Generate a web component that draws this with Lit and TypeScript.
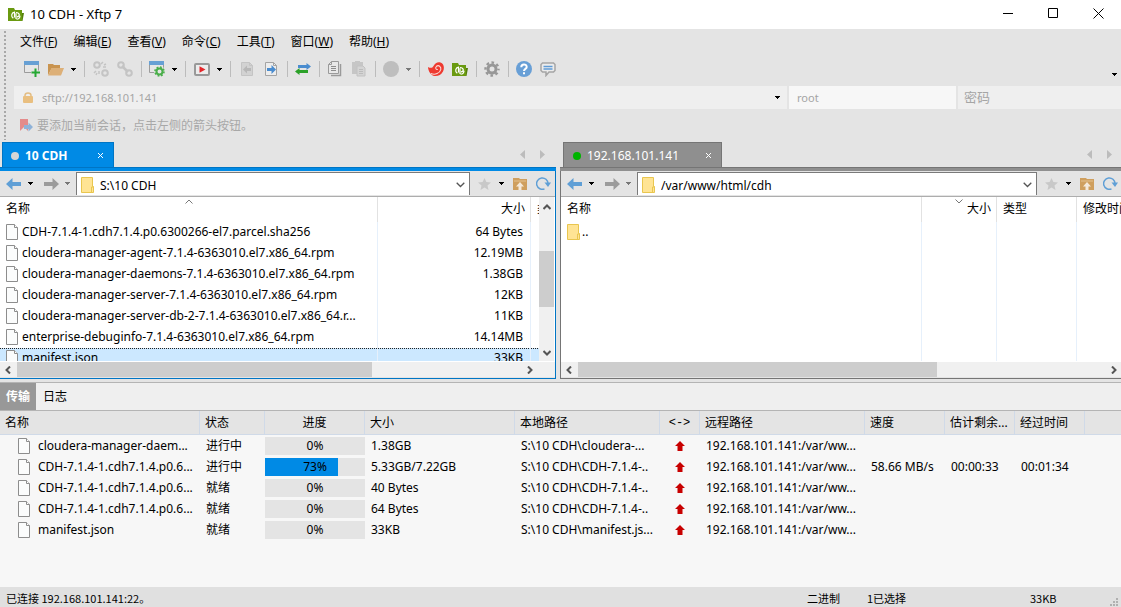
import { LitElement, html, svg, css, nothing } from "lit";
import { customElement, property } from "lit/decorators.js";
import { classMap } from "lit/directives/class-map.js";

/* ---------- glyphs ---------- */

const caret = (color = "#000") => html`<svg class="glyph" width="5" height="3" viewBox="0 0 5 3">
  <path d="M0 0h5v1H0zM1 1h3v1H1zM2 2h1v1H2z" fill=${color} shape-rendering="crispEdges" />
</svg>`;

const fileIcon = html`<svg class="glyph" width="12" height="16" viewBox="0 0 12 16">
  <path d="M.5.5h8l3 3v12H.5z" fill="#fbfcfc" stroke="#8d8d8d" />
  <path d="M8.5.5v3h3" fill="#fff" stroke="#8d8d8d" />
</svg>`;

const folderIcon = html`<svg class="glyph" width="13" height="16" viewBox="0 0 13 16">
  <path d="M.5.5h11v9h1v6H.5z" fill="#ffe494" stroke="#e9c64f" />
  <path d="M10.5 15V10h2" fill="none" stroke="#e9c64f" />
</svg>`;

const xftpLogo = html`<svg class="glyph" width="16" height="13" viewBox="0 0 16 13">
  <path d="M0 0h6l1 2h7v11H0z" fill="#6a9a10" />
  <path d="M14 5h2l-1.500 8H14z" fill="#55800a" />
  <path d="M5.300 10.300C2.800 8.500 3.200 4.900 6.500 4.200V9.500M8 11V5.200M8 4.500c4 0 4.300 4 1 4.300M8.500 11.200c2 0 3.400-1.600 3.500-3.500" fill="none" stroke="#fff" stroke-width="1.200" />
</svg>`;

const windowShape = svg`<path d="M.5.5h14v11H.5z" fill="#e6e6e6" stroke="#9b9b9b" />
  <path d="M0 0h15v4H0z" fill="#67a0d4" />`;

const icon = (w: number, h: number, body: unknown) =>
  html`<svg class="glyph" width=${w} height=${h} viewBox="0 0 ${w} ${h}">${body}</svg>`;

const pageShape = (c: string, f: string) =>
  svg`<path d="M.5.5h8l3 3v10H.5z" fill=${f} stroke=${c} /><path d="M8.500.5v3h3" fill="none" stroke=${c} />`;

const chainShape = svg`<g fill="none" stroke="#c4c4c4" stroke-width="2">
  <circle cx="4" cy="4" r="2.800" /><circle cx="12" cy="12" r="2.800" /></g>`;

const icons = {
  newSession: icon(16, 16, svg`${windowShape}<path d="M11.500 7v9M7 11.500h9" stroke="#e4e4e4" stroke-width="4" /><path d="M11.500 7.500V16M7.500 11.500H16" stroke="#25a833" stroke-width="2" />`),
  open: icon(16, 13, svg`<path d="M0 12V1h5l1 1h6v3h-8z" fill="#c99450" /><path d="M3.500 5H16l-3 7.500H0z" fill="#ddb078" />`),
  disconnect: icon(16, 16, svg`${chainShape}<path d="M8 3l2-2M10 6h3M6 10v3M3 10l-2 2M13 3l-2 1M4 12l-1 2" stroke="#c4c4c4" stroke-width="1.500" />`),
  reconnect: icon(16, 16, svg`${chainShape}<path d="M5 5l6 6" stroke="#c4c4c4" stroke-width="2.500" />`),
  properties: icon(16, 16, svg`${windowShape}<circle cx="10.500" cy="10.500" r="5.500" fill="#e4e4e4" /><circle cx="10.500" cy="10.500" r="3" fill="none" stroke="#4aae4a" stroke-width="2" /><circle cx="10.500" cy="10.500" r="4.500" fill="none" stroke="#4aae4a" stroke-width="1.600" stroke-dasharray="1.800 1.730" />`),
  run: icon(16, 13, svg`<rect x="1" y="1" width="14" height="11" rx="1" fill="#ececec" stroke="#999" stroke-width="2" /><path d="M5.500 3.200v6.600l6-3.300z" fill="#e5252a" />`),
  sendLeft: icon(12, 14, svg`${pageShape("#c4c4c4", "#d2d2d2")}<path d="M2 7.500l4-4v2.500h4v3H6v2.500z" fill="#b7b7b7" />`),
  sendRight: icon(12, 14, svg`${pageShape("#a4a4a4", "#ededed")}<path d="M11 7.500l-4.500-4.500v3H2v3h4.500v3z" fill="#4a8ccf" />`),
  transfer: icon(16, 12, svg`<path d="M16 3.500L11.500 0v2H3v3h8.500v2z" fill="#4a8ccf" /><path d="M0 8.500L4.500 5v2H13v3H4.500v2z" fill="#2ba128" />`),
  copy: icon(14, 16, svg`<path d="M3.500.5h7v12h-10v-9z" fill="#e8e8e8" stroke="#9a9a9a" /><path d="M.5 3.500h3v-3" fill="none" stroke="#9a9a9a" /><path d="M3 5.500h5M3 7.500h5M3 9.500h5" stroke="#8d8d8d" /><path d="M12.500 3v11.500H3" fill="none" stroke="#9a9a9a" stroke-width="1.500" />`),
  paste: icon(14, 16, svg`<path d="M0 1h3V0h5v1h3v12H0z" fill="#c6c6c6" /><path d="M5 5h6l2 2v8H5z" fill="#d4d4d4" stroke="#c2c2c2" /><path d="M7 8.500h4M7 10.500h4M7 12.500h4" stroke="#bcbcbc" />`),
  stop: icon(16, 16, svg`<circle cx="8" cy="8" r="8" fill="#bebebe" />`),
  xshell: icon(16, 15, svg`<path d="M0 5c2.500 1.500 4.500 1 5.500-1C7 1 9.500-.3 12.500.4c3.500 1 4.200 5.600 2.500 9-1.700 3.200-5 5-8.500 4.600C3 13.500.3 9.500 0 5z" fill="#ee3a30" /><path d="M3 11.500c4 2 9-.5 9.800-4 .6-3-2.300-4.800-4.300-3.200-1.600 1.400-.5 3.800 1.300 3.100" fill="none" stroke="#f9dcd8" stroke-width="1.100" />`),
  xftp: xftpLogo,
  options: icon(16, 16, svg`<circle cx="8" cy="8" r="4" fill="none" stroke="#979797" stroke-width="3" /><circle cx="8" cy="8" r="6.500" fill="none" stroke="#979797" stroke-width="2.400" stroke-dasharray="2.600 2.505" stroke-dashoffset="1.300" />`),
  help: icon(16, 16, svg`<circle cx="8" cy="8" r="8" fill="#689fd6" /><path d="M5.300 6.200c0-3.600 5.400-3.500 5.400-.3C10.700 8 8 7.800 8 10" fill="none" stroke="#fff" stroke-width="2" /><path d="M7 11.200h2v2H7z" fill="#fff" />`),
  feedback: icon(16, 15, svg`<path d="M2.500 1h11l1.500 1.500v6L13.500 10H9l-3 3.500V10H2.500L1 8.500v-6z" fill="#ececec" stroke="#a5a5a5" stroke-width="1.500" /><path d="M3.500 4.500h9M3.500 7h9" stroke="#5f9bd5" stroke-width="1.500" />`),
  lock: icon(10, 11, svg`<path d="M2 5V3.500C2 .3 8 .3 8 3.500V5" fill="none" stroke="#e3bd84" stroke-width="1.500" /><rect y="4" width="10" height="7" rx="1" fill="#e9bf80" />`),
  bookmark: icon(13, 13, svg`<path d="M0 0h8v12L4 8l-4 4z" fill="#e48b8b" /><path d="M13 8L8.500 3.500V6H4v4h4.500v2.500z" fill="#8fb2d8" />`),
  back: icon(15, 12, svg`<path d="M0 6l6.500-6v4H15v4H6.500v4z" fill="#5f9fd6" />`),
  forward: icon(15, 12, svg`<path d="M15 6L8.500 0v4H0v4h8.500v4z" fill="#9b9b9b" />`),
  star: icon(13, 12, svg`<path d="M6.500 0l1.900 4 4.600.4-3.500 3L10.500 12l-4-2.500-4 2.500 1-4.600L0 4.400 4.600 4z" fill="#c8c8c8" />`),
  up: icon(14, 12, svg`<path d="M0 0h6l1 1h7v11H0z" fill="#cf9f5e" /><path d="M1 3h12" stroke="#dcb67f" stroke-width="1.500" /><path d="M7 4l4 4.500H8.500V12h-3V8.500H3z" fill="#f4e9da" />`),
  refresh: icon(16, 13, svg`<path d="M8.500 11.900A5.700 5.700 0 1 1 12 6.500" fill="none" stroke="#5f9fd6" stroke-width="1.500" /><path d="M8.500 5.500H15l-3 4.500z" fill="#5f9fd6" />`),
  chevron: icon(9, 6, svg`<path d="M.7.700L4.500 4.500 8.300.7" fill="none" stroke="#555" stroke-width="1.300" />`),
  close: icon(5, 5, svg`<path d="M0 0l5 5M5 0L0 5" stroke="#fff" />`),
  prev: icon(5, 9, svg`<path d="M5 0v9L0 4.500z" fill="#bcbcbc" />`),
  next: icon(5, 9, svg`<path d="M0 0v9l5-4.500z" fill="#bcbcbc" />`),
  upload: icon(10, 10, svg`<path d="M5 0l5 5H7.500v5h-5V5H0z" fill="#c80000" />`),
};

const chev = { up: "M.5 6L4 2.500 7.500 6", down: "M.5 2L4 5.500 7.500 2", left: "M6 .5L2.500 4 6 7.500", right: "M2 .5L5.500 4 2 7.500" };
const scrollArrow = (d: keyof typeof chev) => icon(8, 8, svg`<path d=${chev[d]} fill="none" stroke="#555" stroke-width="2" />`);

/* ---------- shared styles ---------- */

const base = css`
  * { box-sizing: border-box; }
  button, input { font: inherit; color: inherit; background: none; border: 0; padding: 0; margin: 0; outline: 0; border-radius: 0; min-width: 0; }
  button { display: flex; align-items: center; justify-content: center; }
  .glyph { display: block; flex: none; }
  table { border-collapse: separate; border-spacing: 0; table-layout: fixed; width: 100%; }
  th, td { padding: 0; text-align: left; font-weight: 400; white-space: nowrap; overflow: hidden; }
`;

/* ---------- file pane ---------- */

interface FileRow { name: string; size?: string; folder?: boolean; selected?: boolean; }

@customElement("file-pane")
export class FilePane extends LitElement {
  @property({ type: Boolean, reflect: true }) active = false;
  @property({ type: Boolean }) scrollable = false;
  @property() tab = "";
  @property() path = "";
  @property() sort: "asc" | "desc" = "asc";
  @property({ attribute: false }) rows: FileRow[] = [];

  static styles = [base, css`
    :host { --accent: #8f8f8f; --edge: #757575; display: flex; flex-direction: column; min-width: 0; }
    :host([active]) { --accent: #008ae5; --edge: #0075c4; }
    .tabs { display: flex; align-items: center; height: 25px; padding: 0 7px 0 3px; }
    :host([active]) .tabs { padding: 0 9px 0 2px; }
    .tab { display: flex; align-items: center; gap: 6px; align-self: stretch; padding: 1px 10px 0 9px; width: 159px; background: var(--accent); border: 1px solid var(--edge); border-bottom: 0; color: #fff; }
    :host([active]) .tab { width: 112px; font-weight: 700; padding: 1px 10px 0 8px; }
    .dot { width: 8px; height: 8px; border-radius: 50%; background: #00b400; }
    :host([active]) .dot { background: #d6d6d6; }
    .tab button { margin-left: auto; }
    .pager { display: flex; gap: 15px; margin-left: auto; padding-right: 2px; }
    .strip { height: 4px; background: var(--accent); border-top: 1px solid var(--edge); }
    .frame { border-bottom: 1px solid var(--edge); border-left: 1px solid var(--edge); }
    :host([active]) .frame { border-left: 0; border-right: 1px solid var(--edge); }
    .nav { display: flex; align-items: center; height: 26px; padding: 0 3px 0 6px; background: #e4e4e4; border-bottom: 1px solid #adadad; }
    .go { gap: 7px; padding-right: 11px; }
    .go2 { gap: 6px; padding-right: 6px; }
    .combo { display: flex; align-items: center; flex: 1; min-width: 0; align-self: stretch; margin: 1px 8px 1px 0; background: #fff; border: 1px solid #7a7a7a; border-bottom: 0; padding: 2px 4px 0 4px; gap: 6px; }
    .combo input { flex: 1; height: 20px; }
    .tools { display: flex; align-items: center; }
    .tools button:nth-child(2) { margin: 0 9px 0 8px; }
    .tools button:nth-child(4) { margin-left: 9px; }
    :host(:not([active])) .nav { padding-right: 2px; }
    .view { display: flex; height: 165px; background: #fff; padding-bottom: 1px; }
    .clip { flex: 1; min-width: 0; overflow: hidden; }
    table { height: 100%; }
    thead th { position: relative; height: 25px; line-height: 24px; padding: 0 6px; border-right: 1px solid #e2e2e2; vertical-align: top; }
    td { border-right: 1px solid #e6f0fb; vertical-align: top; }
    .item td { height: 21px; }
    td:last-child, thead th:last-child { border-right: 0; padding-right: 0; }
    .end { text-align: right; padding-right: 7px; line-height: 19px; }
    thead .end { padding-right: 5px; line-height: 24px; }
    .entry { display: flex; align-items: center; gap: 4px; height: 19px; padding-left: 6px; }
    .entry.dir { gap: 2px; }
    .selected td { background: #cce8ff; background-image: repeating-linear-gradient(90deg, #222 0 1px, transparent 1px 2px); background-size: 100% 1px; background-repeat: no-repeat; }
    .mark { position: absolute; top: 2px; left: 50%; margin-left: -4px; }
    .c1 { width: 361px; } .c2 { width: 75px; } .c3 { width: 80px; }
    :host([active]) .c1 { width: 378px; }
    :host([active]) .c2 { width: 153px; }
    .vbar { display: flex; flex-direction: column; align-items: center; width: 15px; margin-right: 1px; padding: 6px 0 4px; background: #f0f0f0; }
    .vthumb { align-self: stretch; height: 56px; background: #cdcdcd; margin: 40px 0 auto; }
    .hbar { display: flex; align-items: center; height: 15px; margin-bottom: 1px; padding: 0 3px 0 4px; background: #f0f0f0; }
    :host([active]) .hbar { padding-right: 21px; }
    .hthumb { align-self: stretch; width: 65%; background: #cdcdcd; margin: 0 auto 0 5px; }
    :host([active]) .hthumb { width: 67%; }
    .foot { background: #fff; }
  `];

  render() {
    return html`
      <div class="tabs">
        <div class="tab"><span class="dot"></span><span>${this.tab}</span><button aria-label="关闭标签">${icons.close}</button></div>
        <div class="pager"><button aria-label="上一个标签">${icons.prev}</button><button aria-label="下一个标签">${icons.next}</button></div>
      </div>
      <div class="strip"></div>
      <div class="frame">
        <div class="nav">
          <button class="go" aria-label="后退">${icons.back}${caret()}</button>
          <button class="go2" aria-label="前进">${icons.forward}${caret("#777")}</button>
          <div class="combo">
            ${folderIcon}
            <input aria-label="路径" .value=${this.path} />
            <button aria-label="路径列表">${icons.chevron}</button>
          </div>
          <div class="tools">
            <button aria-label="书签">${icons.star}</button>
            <button aria-label="书签列表">${caret()}</button>
            <button aria-label="上级目录">${icons.up}</button>
            <button aria-label="刷新">${icons.refresh}</button>
          </div>
        </div>
        <div class="view">
          <div class="clip">
            <table>
              <colgroup><col class="c1" /><col class="c2" />${this.scrollable ? nothing : html`<col class="c3" />`}<col /></colgroup>
              <thead><tr>
                <th>名称${this.sort === "asc" ? this.mark("M0.500 4.500L4 1 7.500 4.500") : nothing}</th>
                <th class="end">大小${this.sort === "desc" ? this.mark("M0.500 0.500L4 4 7.500 0.500") : nothing}</th>
                <th>类型</th>
                ${this.scrollable ? nothing : html`<th>修改时间</th>`}
              </tr></thead>
              <tbody>
                ${this.rows.map((r) => html`<tr class=${classMap({ item: true, selected: !!r.selected })}>
                  <td><div class=${classMap({ entry: true, dir: !!r.folder })}>${r.folder ? folderIcon : fileIcon}<span>${r.name}</span></div></td>
                  <td class="end">${r.size ?? ""}</td><td></td>${this.scrollable ? nothing : html`<td></td>`}
                </tr>`)}
                ${this.scrollable ? nothing : html`<tr><td></td><td></td><td></td><td></td></tr>`}
              </tbody>
            </table>
          </div>
          ${this.scrollable ? html`<div class="vbar">${scrollArrow("up")}<div class="vthumb"></div>${scrollArrow("down")}</div>` : nothing}
        </div>
        <div class="foot"><div class="hbar">${scrollArrow("left")}<div class="hthumb"></div>${scrollArrow("right")}</div></div>
      </div>`;
  }

  private mark(d: string) {
    return html`<svg class="mark" width="8" height="5" viewBox="0 0 8 5"><path d=${d} fill="none" stroke="#777" /></svg>`;
  }
}

/* ---------- transfer queue ---------- */

interface Transfer { name: string; state: string; pct: number; size: string; local: string; speed?: string; left?: string; spent?: string; }

const transfers: Transfer[] = [
  { name: "cloudera-manager-daem...", state: "进行中", pct: 0, size: "1.38GB", local: "S:\\10 CDH\\cloudera-..." },
  { name: "CDH-7.1.4-1.cdh7.1.4.p0.6...", state: "进行中", pct: 73, size: "5.33GB/7.22GB", local: "S:\\10 CDH\\CDH-7.1.4-..", speed: "58.66 MB/s", left: "00:00:33", spent: "00:01:34" },
  { name: "CDH-7.1.4-1.cdh7.1.4.p0.6...", state: "就绪", pct: 0, size: "40 Bytes", local: "S:\\10 CDH\\CDH-7.1.4-.." },
  { name: "CDH-7.1.4-1.cdh7.1.4.p0.6...", state: "就绪", pct: 0, size: "64 Bytes", local: "S:\\10 CDH\\CDH-7.1.4-.." },
  { name: "manifest.json", state: "就绪", pct: 0, size: "33KB", local: "S:\\10 CDH\\manifest.js..." },
];

@customElement("transfer-panel")
export class TransferPanel extends LitElement {
  static styles = [base, css`
    :host { display: flex; flex-direction: column; background: #f7f7f7; border-top: 1px solid #b4b4b4; overflow: hidden; }
    .tabs { display: flex; height: 28px; background: #efefef; border-bottom: 1px solid #b4b4b4; }
    .tabs button { padding: 0 7px; }
    .tabs .on { background: #989898; color: #fff; font-weight: 700; padding: 0 6px; }
    thead th { height: 24px; padding-left: 5px; background: #e4e4e4; border-right: 1px solid #d0dae8; border-bottom: 1px solid #d0dae8; }
    thead th:last-child { border-right: 0; }
    thead .mid { text-align: center; padding: 0; }
    .mono { font-family: "Liberation Mono", monospace; }
    td { height: 21px; padding-left: 6px; line-height: 20px; }
    .entry { display: flex; align-items: center; gap: 8px; padding-left: 12px; height: 20px; }
    .cell { padding: 0; }
    .bar { position: relative; height: 18px; background: #e4e4e4; line-height: 18px; text-align: center; }
    .fill { height: 18px; background: #008ae5; }
    .pct { position: absolute; inset: 0; }
    .dir .glyph { margin: 0 auto; }
    .w200 { width: 200px; } .w65 { width: 65px; } .w100 { width: 100px; } .w150 { width: 150px; } .w145 { width: 145px; }
    .w40 { width: 40px; } .w165 { width: 165px; } .w80 { width: 80px; } .w70 { width: 70px; }
  `];

  render() {
    return html`
      <div class="tabs"><button class="on">传输</button><button>日志</button></div>
      <table>
        <colgroup>${[200, 65, 100, 150, 145, 40, 165, 80, 70, 70].map((w) => html`<col class="w${w}" />`)}<col /></colgroup>
        <thead><tr>
          <th>名称</th><th>状态</th><th class="mid">进度</th><th>大小</th><th>本地路径</th><th class="mid mono">&lt;-&gt;</th>
          <th>远程路径</th><th>速度</th><th>估计剩余...</th><th>经过时间</th><th></th>
        </tr></thead>
        <tbody>
          ${transfers.map((t) => html`<tr>
            <td><div class="entry">${fileIcon}<span>${t.name}</span></div></td>
            <td>${t.state}</td>
            <td class="cell"><div class="bar"><div class="fill" style="width:${t.pct}%"></div><span class="pct">${t.pct}%</span></div></td>
            <td>${t.size}</td><td>${t.local}</td>
            <td class="cell dir">${icons.upload}</td>
            <td>192.168.101.141:/var/ww...</td>
            <td>${t.speed ?? ""}</td><td>${t.left ?? ""}</td><td>${t.spent ?? ""}</td><td></td>
          </tr>`)}
        </tbody>
      </table>`;
  }
}

/* ---------- application shell ---------- */

const localFiles: FileRow[] = [
  { name: "CDH-7.1.4-1.cdh7.1.4.p0.6300266-el7.parcel.sha256", size: "64 Bytes" },
  { name: "cloudera-manager-agent-7.1.4-6363010.el7.x86_64.rpm", size: "12.19MB" },
  { name: "cloudera-manager-daemons-7.1.4-6363010.el7.x86_64.rpm", size: "1.38GB" },
  { name: "cloudera-manager-server-7.1.4-6363010.el7.x86_64.rpm", size: "12KB" },
  { name: "cloudera-manager-server-db-2-7.1.4-6363010.el7.x86_64.r...", size: "11KB" },
  { name: "enterprise-debuginfo-7.1.4-6363010.el7.x86_64.rpm", size: "14.14MB" },
  { name: "manifest.json", size: "33KB", selected: true },
];
const remoteFiles: FileRow[] = [{ name: "..", folder: true }];

const menus = [["文件", "F"], ["编辑", "E"], ["查看", "V"], ["命令", "C"], ["工具", "T"], ["窗口", "W"], ["帮助", "H"]];

type Tool = { label: string; icon?: unknown; caret?: string };
const groups: Tool[][] = [
  [{ label: "新建会话", icon: icons.newSession }, { label: "打开", icon: icons.open, caret: "#000" }],
  [{ label: "断开", icon: icons.disconnect }, { label: "重新连接", icon: icons.reconnect }],
  [{ label: "属性", icon: icons.properties, caret: "#000" }],
  [{ label: "运行", icon: icons.run, caret: "#000" }],
  [{ label: "传输到左侧", icon: icons.sendLeft }, { label: "传输到右侧", icon: icons.sendRight }],
  [{ label: "同步", icon: icons.transfer }],
  [{ label: "复制", icon: icons.copy }, { label: "粘贴", icon: icons.paste }],
  [{ label: "停止", icon: icons.stop, caret: "#777" }],
  [{ label: "Xshell", icon: icons.xshell }, { label: "Xftp", icon: icons.xftp }],
  [{ label: "选项", icon: icons.options }],
  [{ label: "帮助", icon: icons.help }, { label: "反馈", icon: icons.feedback }],
];

@customElement("app-root")
export class AppRoot extends LitElement {
  static styles = [base, css`
    :host { display: flex; flex-direction: column; min-height: 100vh; overflow: hidden; background: #e4e4e4; color: #000; font: 12px/18px "Noto Sans", "Noto Sans CJK SC", sans-serif; }
    .title { display: flex; align-items: center; height: 29px; padding-left: 8px; gap: 6px; background: #fff; font-size: 13px; }
    .title > span { padding-bottom: 1px; }
    .window { display: flex; margin-left: auto; align-self: stretch; }
    .window button { width: 45px; padding-bottom: 3px; }
    .bars { display: flex; }
    .grip { width: 2px; margin: 2px 8px 2px 4px; background: repeating-linear-gradient(#a8a8a8 0 2px, transparent 2px 4px); }
    .stack { flex: 1; min-width: 0; }
    .menu { display: flex; align-items: center; gap: 16px; height: 26px; padding-left: 6px; }
    .toolbar { display: flex; align-items: center; height: 30px; padding: 0 4px 2px 6px; }
    .toolbar .tool { width: 24px; height: 24px; }
    .drop { width: 10px; height: 24px; margin-right: 2px; }
    .sep { width: 1px; height: 16px; background: #bcbcbc; margin: 0 3px 0 4px; }
    .sep.wide { margin: 0 4px; }
    .more { margin: 10px 0 0 auto; }
    .address { display: flex; gap: 2px; height: 24px; padding-top: 1px; color: #a5a5a5; }
    .url { display: flex; align-items: center; flex: 1; gap: 9px; padding: 0 7px 0 9px; background: #efefef; font-size: 11px; }
    .address input { color: #a5a5a5; }
    .address input::placeholder { color: #a5a5a5; opacity: 1; }
    .url input { flex: 1; }
    .user { width: 167px; padding: 0 8px; background: #f7f7f7; font-size: 11px; }
    .pass { width: 163px; padding: 0 6px 2px; background: #efefef; font-size: 13px; }
    .hint { display: flex; align-items: center; gap: 4px; height: 33px; padding-left: 6px; color: #a8a8a8; }
    .panes { display: grid; grid-template-columns: 556fr 561fr; gap: 4px; padding-bottom: 3px; }
    transfer-panel { flex: 1; }
    .status { display: flex; align-items: center; height: 20px; padding: 2px 1px 0 6px; background: #e0e0e0; font: 11px/16px "Noto Sans CJK SC", sans-serif; }
    .status .mode { margin-left: auto; width: 60px; }
    .status .count { width: 163px; }
    .status .total { width: 80px; }
    .status .glyph { align-self: flex-end; }
  `];

  render() {
    return html`
      <header class="title">
        ${xftpLogo}<span>10 CDH - Xftp 7</span>
        <div class="window">
          <button aria-label="最小化">${icon(11, 11, svg`<path d="M0 5.500h10" stroke="#000" />`)}</button>
          <button aria-label="最大化">${icon(11, 11, svg`<path d="M.5.500h9v9h-9z" fill="none" stroke="#000" />`)}</button>
          <button aria-label="关闭">${icon(11, 11, svg`<path d="M.5.500l10 10M10.500.5l-10 10" stroke="#000" />`)}</button>
        </div>
      </header>
      <div class="bars">
        <div class="grip"></div>
        <div class="stack">
          <nav class="menu">${menus.map(([t, k]) => html`<button><span>${t}(<u>${k}</u>)</span></button>`)}</nav>
          <div class="toolbar">
            ${groups.map((g, i) => html`${i ? html`<span class=${classMap({ sep: true, wide: !!groups[i - 1].some((t) => t.caret) })}></span>` : nothing}
              ${g.map((t) => html`<button class="tool" aria-label=${t.label}>${t.icon}</button>${t.caret ? html`<button class="drop" aria-label="${t.label}列表">${caret(t.caret)}</button>` : nothing}`)}`)}
            <button class="more" aria-label="更多">${caret()}</button>
          </div>
          <div class="address">
            <div class="url">${icons.lock}<input aria-label="地址" .value=${"sftp://192.168.101.141"} /><button aria-label="地址列表">${caret()}</button></div>
            <input class="user" aria-label="用户名" .value=${"root"} />
            <input class="pass" type="password" aria-label="密码" placeholder="密码" />
          </div>
          <div class="hint">${icons.bookmark}<span>要添加当前会话，点击左侧的箭头按钮。</span></div>
        </div>
      </div>
      <main class="panes">
        <file-pane active scrollable tab="10 CDH" path="S:\\10 CDH" sort="asc" .rows=${localFiles}></file-pane>
        <file-pane tab="192.168.101.141" path="/var/www/html/cdh" sort="desc" .rows=${remoteFiles}></file-pane>
      </main>
      <transfer-panel></transfer-panel>
      <footer class="status">
        <span>已连接 192.168.101.141:22。</span>
        <span class="mode">二进制</span><span class="count">1已选择</span><span class="total">33KB</span>
        ${icon(10, 9, svg`<path d="M6 0h2v2H6zM3 3h2v2H3zM6 3h2v2H6zM0 6h2v2H0zM3 6h2v2H3zM6 6h2v2H6z" fill="#b0b0b0" />`)}
      </footer>`;
  }
}
